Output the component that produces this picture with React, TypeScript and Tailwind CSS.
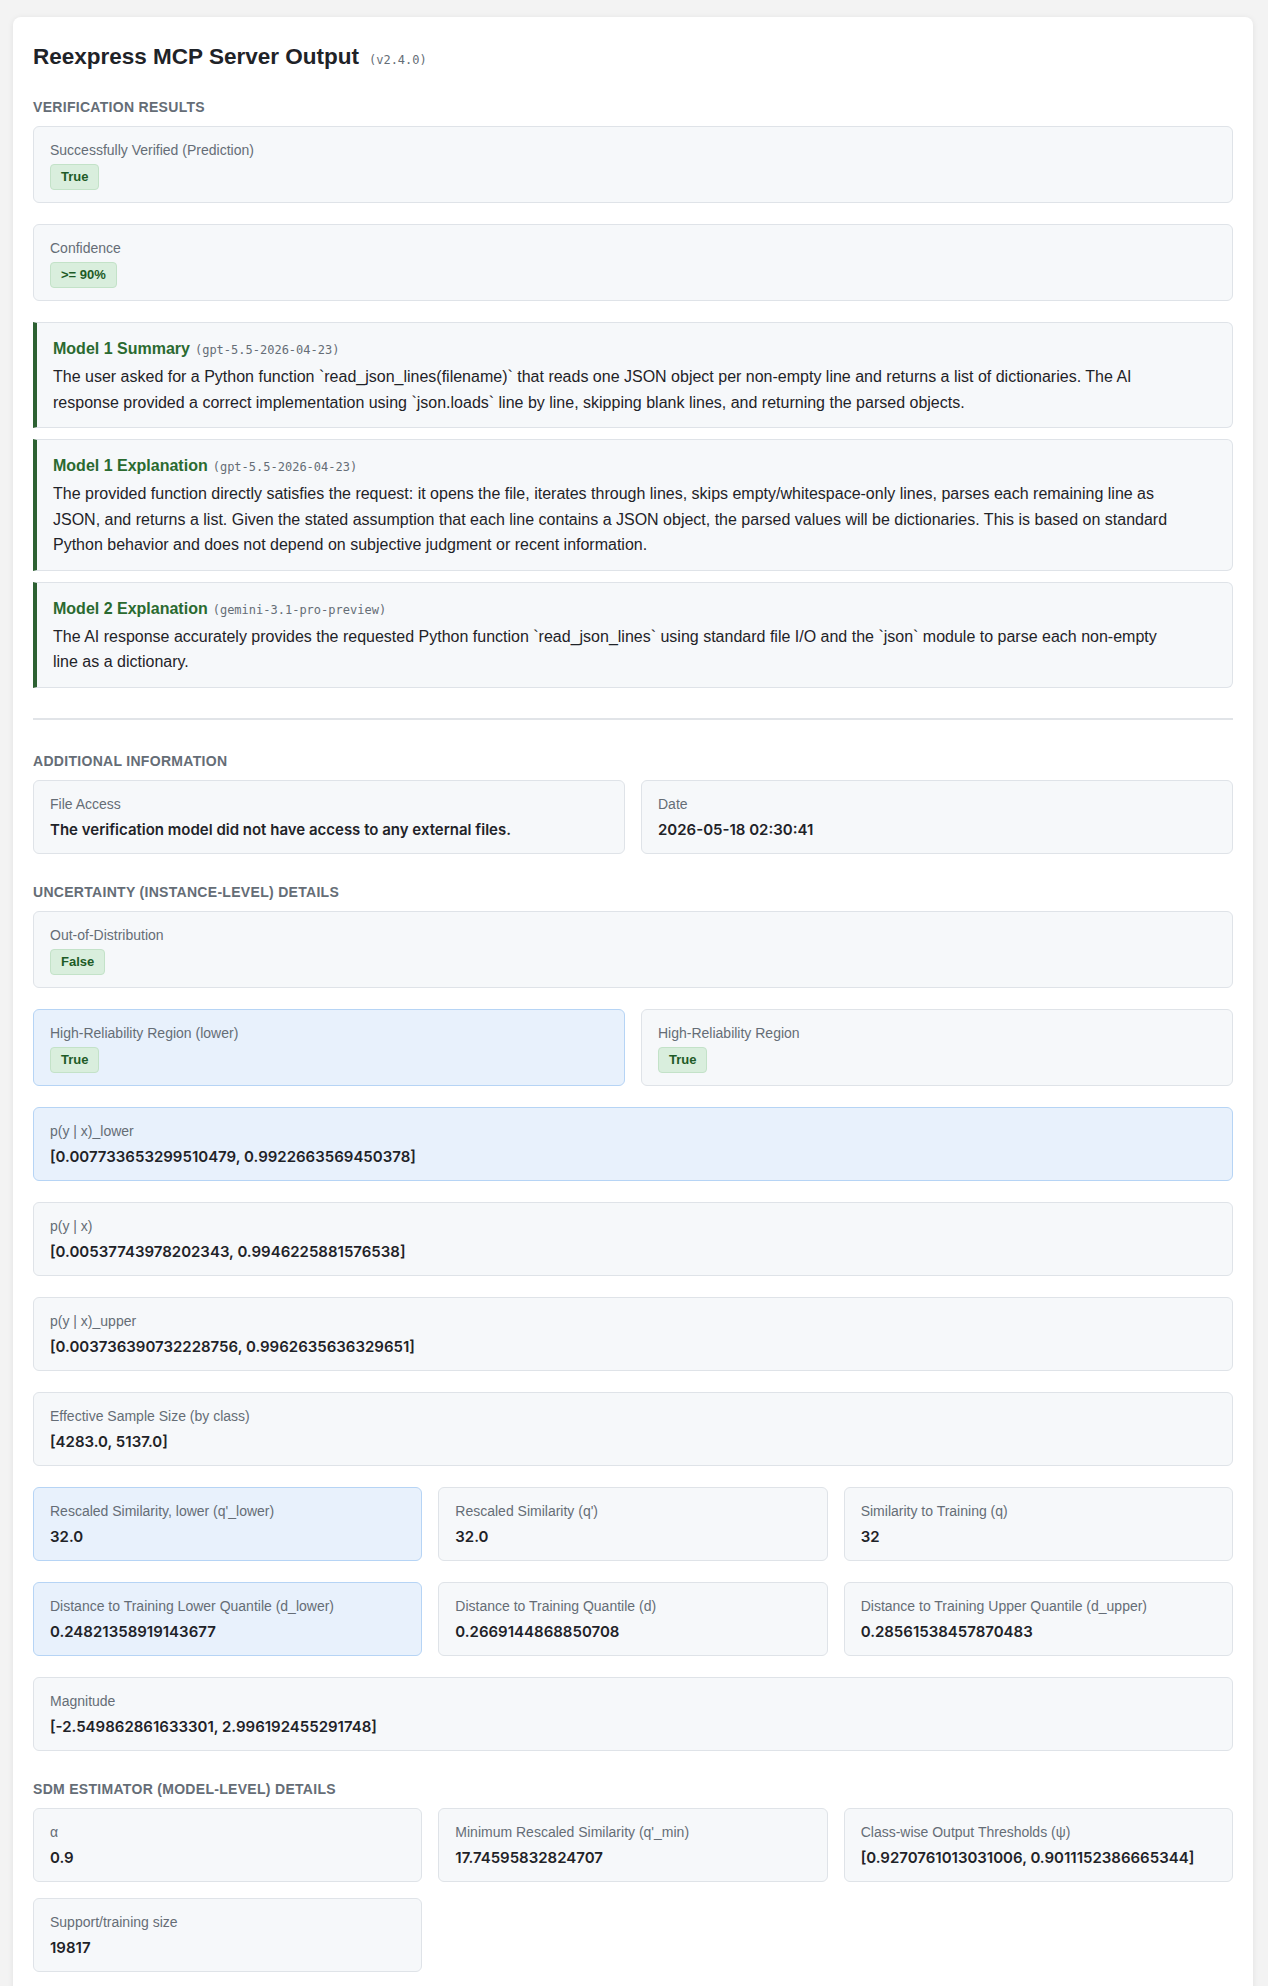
import React from 'react';

type Tone = 'default' | 'blue';

const boxTone = (tone: Tone) =>
  tone === 'blue' ? 'bg-[#e8f1fc] border-[#b6d4f5]' : 'bg-[#f6f8fa] border-[#dfe3e8]';

const SectionTitle: React.FC<{ children: React.ReactNode }> = ({ children }) => (
  <h2 className="mt-[7px] mb-[9px] text-[14px] leading-[20px] font-bold uppercase tracking-[0.3px] text-[#656d76]">
    {children}
  </h2>
);

const Badge: React.FC<{ children: React.ReactNode }> = ({ children }) => (
  <span className="inline-block h-[26px] px-[10px] rounded border border-[#c3e2c8] bg-[#d9eedd] text-[13px] leading-[24px] font-bold text-[#1e5b27]">
    {children}
  </span>
);

interface FieldProps {
  label: string;
  value?: string;
  badge?: string;
  tone?: Tone;
  className?: string;
}

const Field: React.FC<FieldProps> = ({ label, value, badge, tone = 'default', className = '' }) => (
  <div className={`rounded-md border px-4 pt-[14px] ${badge ? 'pb-[12px]' : 'pb-[11px]'} ${boxTone(tone)} ${className}`}>
    <div className="text-[14px] leading-[18px] text-[#656d76]">{label}</div>
    {badge ? (
      <div className="mt-[5px] flex">
        <Badge>{badge}</Badge>
      </div>
    ) : (
      <div className="mt-[5px] font-['Inter',sans-serif] text-[15px] leading-[24px] font-semibold text-[#1f2328]">
        {value}
      </div>
    )}
  </div>
);

// Summary / explanation blocks with the green rule on the left
const ModelNote: React.FC<{ title: string; model: string; lines: string[] }> = ({ title, model, lines }) => (
  <div className="mb-[11px] rounded-r-md border border-[#dfe3e8] border-l-4 border-l-[#2d6132] bg-[#f6f8fa] px-4 pt-[14px] pb-[12px]">
    <div className="h-[23px] leading-[23px]">
      <span className="text-[16px] font-bold text-[#2a6a30]">{title}</span>
      <span className="ml-[5px] font-['DejaVu_Sans_Mono',monospace] text-[12px] leading-none text-[#656d76]">({model})</span>
    </div>
    <p className="mt-1 text-[16px] leading-[25.5px] text-[#1f2328]">
      {lines.map((line, i) => (
        <React.Fragment key={i}>
          {line}
          {i < lines.length - 1 && <br />}
        </React.Fragment>
      ))}
    </p>
  </div>
);

export default function App() {
  return (
    <div className="min-h-screen bg-[#f3f3f3] pl-[13px] pt-[17px] font-['Liberation_Sans',Arial,sans-serif]">
      <div className="flex w-[1240px] flex-col rounded-lg bg-white px-5 pt-[25px] pb-8 shadow-[0_1px_6px_rgba(0,0,0,0.08)]">
        <div className="mb-[18px] h-[30px] leading-[30px]">
          <h1 className="inline text-[22.5px] font-bold text-[#1f2328]">Reexpress MCP Server Output</h1>
          <span className="ml-[10px] font-['DejaVu_Sans_Mono',monospace] text-[12px] leading-none text-[#656d76]">(v2.4.0)</span>
        </div>

        <SectionTitle>Verification Results</SectionTitle>
        <Field className="mb-[21px]" label="Successfully Verified (Prediction)" badge="True" />
        <Field className="mb-[21px]" label="Confidence" badge=">= 90%" />

        <ModelNote
          title="Model 1 Summary"
          model="gpt-5.5-2026-04-23"
          lines={[
            'The user asked for a Python function `read_json_lines(filename)` that reads one JSON object per non-empty line and returns a list of dictionaries. The AI',
            'response provided a correct implementation using `json.loads` line by line, skipping blank lines, and returning the parsed objects.',
          ]}
        />
        <ModelNote
          title="Model 1 Explanation"
          model="gpt-5.5-2026-04-23"
          lines={[
            'The provided function directly satisfies the request: it opens the file, iterates through lines, skips empty/whitespace-only lines, parses each remaining line as',
            'JSON, and returns a list. Given the stated assumption that each line contains a JSON object, the parsed values will be dictionaries. This is based on standard',
            'Python behavior and does not depend on subjective judgment or recent information.',
          ]}
        />
        <ModelNote
          title="Model 2 Explanation"
          model="gemini-3.1-pro-preview"
          lines={[
            'The AI response accurately provides the requested Python function `read_json_lines` using standard file I/O and the `json` module to parse each non-empty',
            'line as a dictionary.',
          ]}
        />

        <hr className="mt-[19px] mb-[24px] border-0 border-t-2 border-[#e1e4e8]" />

        <SectionTitle>Additional Information</SectionTitle>
        <div className="grid grid-cols-2 gap-x-4">
          <Field className="mb-[21px]" label="File Access" value="The verification model did not have access to any external files." />
          <Field className="mb-[21px]" label="Date" value="2026-05-18 02:30:41" />
        </div>

        <SectionTitle>Uncertainty (Instance-level) Details</SectionTitle>
        <Field className="mb-[21px]" label="Out-of-Distribution" badge="False" />
        <div className="grid grid-cols-2 gap-x-4">
          <Field className="mb-[21px]" tone="blue" label="High-Reliability Region (lower)" badge="True" />
          <Field className="mb-[21px]" label="High-Reliability Region" badge="True" />
        </div>
        <Field className="mb-[21px]" tone="blue" label="p(y | x)_lower" value="[0.007733653299510479, 0.9922663569450378]" />
        <Field className="mb-[21px]" label="p(y | x)" value="[0.00537743978202343, 0.9946225881576538]" />
        <Field className="mb-[21px]" label="p(y | x)_upper" value="[0.003736390732228756, 0.9962635636329651]" />
        <Field className="mb-[21px]" label="Effective Sample Size (by class)" value="[4283.0, 5137.0]" />
        <div className="grid grid-cols-3 gap-x-4">
          <Field className="mb-[21px]" tone="blue" label="Rescaled Similarity, lower (q'_lower)" value="32.0" />
          <Field className="mb-[21px]" label="Rescaled Similarity (q')" value="32.0" />
          <Field className="mb-[21px]" label="Similarity to Training (q)" value="32" />
        </div>
        <div className="grid grid-cols-3 gap-x-4">
          <Field className="mb-[21px]" tone="blue" label="Distance to Training Lower Quantile (d_lower)" value="0.24821358919143677" />
          <Field className="mb-[21px]" label="Distance to Training Quantile (d)" value="0.2669144868850708" />
          <Field className="mb-[21px]" label="Distance to Training Upper Quantile (d_upper)" value="0.28561538457870483" />
        </div>
        <Field className="mb-[21px]" label="Magnitude" value="[-2.549862861633301, 2.996192455291748]" />

        <SectionTitle>SDM Estimator (Model-level) Details</SectionTitle>
        <div className="grid grid-cols-3 gap-4">
          <Field label="α" value="0.9" />
          <Field label="Minimum Rescaled Similarity (q'_min)" value="17.74595832824707" />
          <Field label="Class-wise Output Thresholds (ψ)" value="[0.9270761013031006, 0.9011152386665344]" />
          <Field label="Support/training size" value="19817" />
        </div>
      </div>
    </div>
  );
}
